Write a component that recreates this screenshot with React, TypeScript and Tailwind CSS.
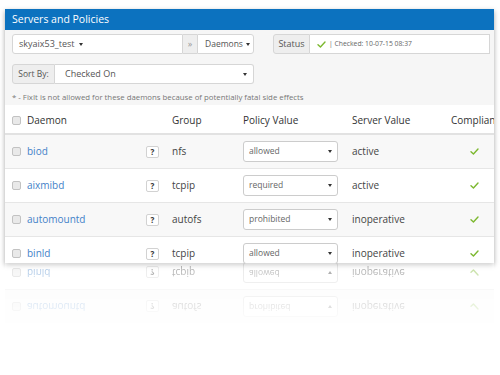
import React from 'react';

type Row = {
  name: string;
  group: string;
  policy: string;
  server: string;
  striped: boolean;
};

const rows: Row[] = [
  { name: 'biod', group: 'nfs', policy: 'allowed', server: 'active', striped: true },
  { name: 'aixmibd', group: 'tcpip', policy: 'required', server: 'active', striped: false },
  { name: 'automountd', group: 'autofs', policy: 'prohibited', server: 'inoperative', striped: true },
  { name: 'binld', group: 'tcpip', policy: 'allowed', server: 'inoperative', striped: false },
];

function Caret() {
  return (
    <span className="inline-block shrink-0 w-0 h-0 border-x-[2.5px] border-x-transparent border-t-[3.5px] border-t-[#333]" />
  );
}

function Check({ className = '' }: { className?: string }) {
  return (
    <svg width="9" height="7" viewBox="0 0 10 8" className={className}>
      <path d="M1 4.2 L3.8 6.8 L9 1.2" fill="none" stroke="#7cb82f" strokeWidth="1.6" strokeLinecap="round" strokeLinejoin="round" />
    </svg>
  );
}

function Checkbox() {
  return <span className="block shrink-0 w-[9px] h-[9px] rounded-[2px] border border-[#c2c2c2] bg-[#e9e9e9]" />;
}

function DaemonRow({ row }: { row: Row }) {
  return (
    <div
      className={`flex items-center h-[34px] shrink-0 overflow-hidden pl-[7px] border-b border-[#e6e6e6] ${
        row.striped ? 'bg-[#f8f8f8]' : 'bg-white'
      }`}
    >
      <Checkbox />
      <span className="shrink-0 ml-[6px] w-[119px] text-[10px] text-[#4382c8]">{row.name}</span>
      <span className="shrink-0 flex items-center justify-center w-[13px] h-[12px] rounded-[2px] border border-[#d2d2d2] bg-white text-[8px] font-bold text-[#333]">
        ?
      </span>
      <span className="shrink-0 ml-[13px] w-[71px] text-[10px] text-[#444]">{row.group}</span>
      <div className="shrink-0 flex items-center justify-between w-[95px] h-[21px] px-[5px] rounded-[3px] border border-[#cccccc] bg-white">
        <span className="text-[8.5px] text-[#666]">{row.policy}</span>
        <Caret />
      </div>
      <span className="shrink-0 ml-[14px] w-[99px] text-[10px] text-[#444]">{row.server}</span>
      <span className="shrink-0 flex justify-center w-[46px]">
        <Check />
      </span>
    </div>
  );
}

export default function App() {
  return (
    <div
      className="w-[500px] h-[375px] bg-white overflow-hidden pt-[9px] pl-[5px]"
      style={{ fontFamily: '"Open Sans", "Liberation Sans", sans-serif' }}
    >
      {/* Panel */}
      <div className="w-[489px] h-[254px] flex flex-col overflow-hidden bg-white shadow-[0_2px_5px_rgba(0,0,0,0.35)]">
        {/* Header */}
        <div className="h-[21px] shrink-0 flex items-center px-[7px] bg-[#0c72bf] text-[10.5px] text-white">
          Servers and Policies
        </div>

        {/* Toolbar */}
        <div className="shrink-0 bg-[#f6f6f6] pt-[4px] px-[7px]">
          <div className="flex items-center h-[20px]">
            <div className="shrink-0 flex items-center w-[171px] h-full pl-[6px] border border-[#d6d6d6] rounded-l-[3px] bg-white text-[9px] text-[#555] gap-[4px]">
              skyaix53_test <Caret />
            </div>
            <div className="shrink-0 flex items-center justify-center w-[14px] h-full border-y border-[#d6d6d6] bg-[#eeeeee] text-[9px] text-[#999]">
              »
            </div>
            <div className="shrink-0 flex items-center w-[57px] h-full pl-[7px] gap-[3px] border border-[#d6d6d6] rounded-r-[3px] bg-white text-[8.5px] text-[#555]">
              Daemons <Caret />
            </div>
            <div className="shrink-0 flex items-center justify-center ml-[19px] w-[37px] h-full border border-[#d6d6d6] rounded-l-[3px] bg-[#eeeeee] text-[9px] text-[#555]">
              Status
            </div>
            <div className="shrink-0 flex items-center w-[180px] h-full pl-[7px] gap-[3px] border-y border-r border-[#d6d6d6] bg-white text-[6.8px] text-[#666]">
              <Check />
              <span>| Checked: 10-07-15 08:37</span>
            </div>
          </div>
          <div className="flex items-center h-[20px] mt-[10px]">
            <div className="shrink-0 flex items-center justify-center w-[43px] h-full border border-[#d6d6d6] rounded-l-[3px] bg-[#eeeeee] text-[8.5px] text-[#555]">
              Sort By:
            </div>
            <div className="shrink-0 flex items-center justify-between w-[199px] h-full pl-[10px] pr-[6px] border-y border-r border-[#d6d6d6] rounded-r-[3px] bg-white text-[9px] text-[#555]">
              Checked On <Caret />
            </div>
          </div>
          <div className="h-[14px] mt-[7px] flex items-center whitespace-nowrap text-[7.8px] text-[#777]">
            * - FixIt is not allowed for these daemons because of potentially fatal side effects
          </div>
        </div>

        {/* Table header */}
        <div className="flex items-center h-[30px] shrink-0 overflow-hidden pl-[7px] pt-[2px] border-b-2 border-[#e2e2e2] bg-white text-[10px] text-[#333]">
          <Checkbox />
          <span className="shrink-0 ml-[6px] w-[145px]">Daemon</span>
          <span className="shrink-0 w-[71px]">Group</span>
          <span className="shrink-0 w-[109px]">Policy Value</span>
          <span className="shrink-0 w-[99px]">Server Value</span>
          <span className="shrink-0 whitespace-nowrap">Compliant</span>
        </div>

        {rows.map((r) => (
          <DaemonRow key={r.name} row={r} />
        ))}
      </div>

      {/* Reflection */}
      <div className="w-[489px] h-[90px] overflow-hidden [mask-image:linear-gradient(to_bottom,rgba(0,0,0,0.45),rgba(0,0,0,0.12)_55%,transparent_85%)]">
        <div className="-scale-y-100 flex flex-col">
          <DaemonRow row={rows[2]} />
          <div className="h-[26px] overflow-hidden">
            <DaemonRow row={rows[3]} />
          </div>
        </div>
      </div>
    </div>
  );
}
